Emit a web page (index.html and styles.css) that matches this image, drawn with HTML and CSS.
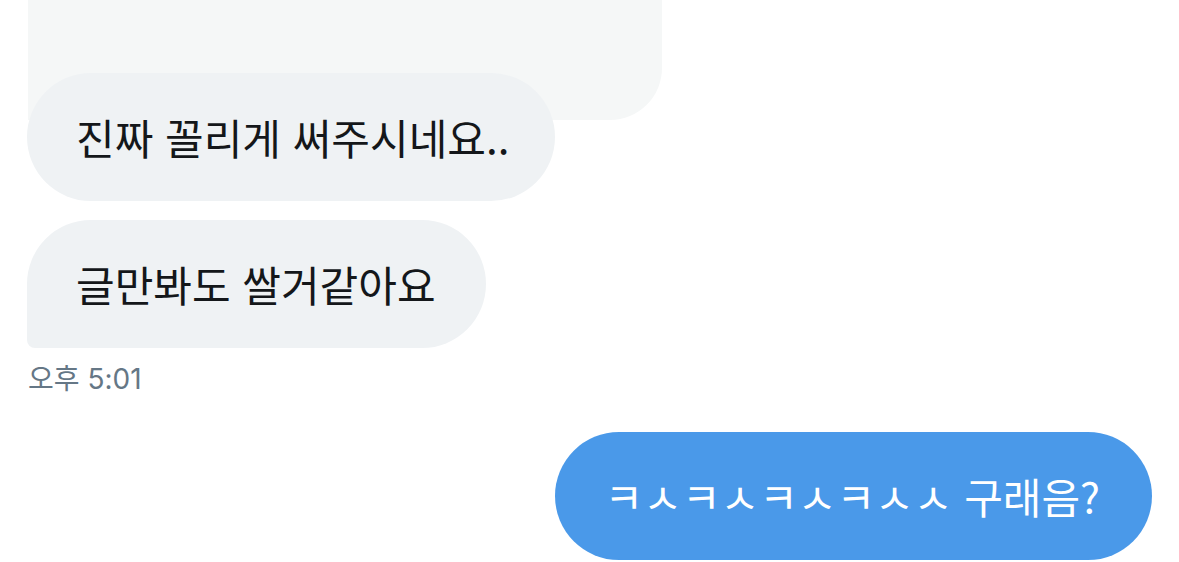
FILE: index.html
```html
<!DOCTYPE html>
<html lang="ko">
<head>
  <meta charset="UTF-8" />
  <title>대화</title>
  <link rel="stylesheet" href="styles.css">
</head>
<body>
  <div class="thread">
    <!-- Earlier message, mostly scrolled out of view -->
    <div class="media-card"></div>

    <div class="bubble received first">진짜 꼴리게 써주시네요..</div>
    <div class="bubble received last">글만봐도 쌀거같아요</div>
    <div class="timestamp">오후 5:01</div>

    <div class="bubble sent">ㅋㅅㅋㅅㅋㅅㅋㅅㅅ 구래음?</div>
  </div>
</body>
</html>
```

FILE: styles.css
```css
/* ===== Page ===== */
body {
  margin: 0;
  background: #ffffff;
  font-family: "Noto Sans CJK KR", "Noto Sans", sans-serif;
  color: #14171a;
  overflow: hidden;
}

.thread {
  display: flex;
  flex-direction: column;
  align-items: flex-start;
  padding: 0 27px;
}

/* ===== Card from earlier message ===== */
.media-card {
  width: 634px;
  height: 120px;
  margin-left: 1px;
  background: #f5f7f7;
  border-radius: 0 0 52px 0;
}

/* ===== Bubbles ===== */
.bubble {
  position: relative;
  display: flex;
  align-items: center;
  height: 128px;
  padding: 0 46px 0 49px;
  box-sizing: border-box;
  border-radius: 64px;
  font-size: 42px;
  line-height: 1;
  white-space: nowrap;
}

.received {
  background: #eff2f4;
}

.received.first {
  margin-top: -47px;
}

.received + .received {
  margin-top: 19px;
}

.received.last {
  border-bottom-left-radius: 8px;
  padding-right: 50px;
}

.timestamp {
  margin-top: 15px;
  margin-left: 1px;
  font-family: Inter, "Noto Sans CJK KR", sans-serif;
  font-size: 28px;
  line-height: 32px;
  color: #657786;
}

.sent {
  align-self: flex-end;
  margin-top: 37px;
  padding: 0 52px 0 50px;
  background: #4a99e9;
  color: #ffffff;
}
```
